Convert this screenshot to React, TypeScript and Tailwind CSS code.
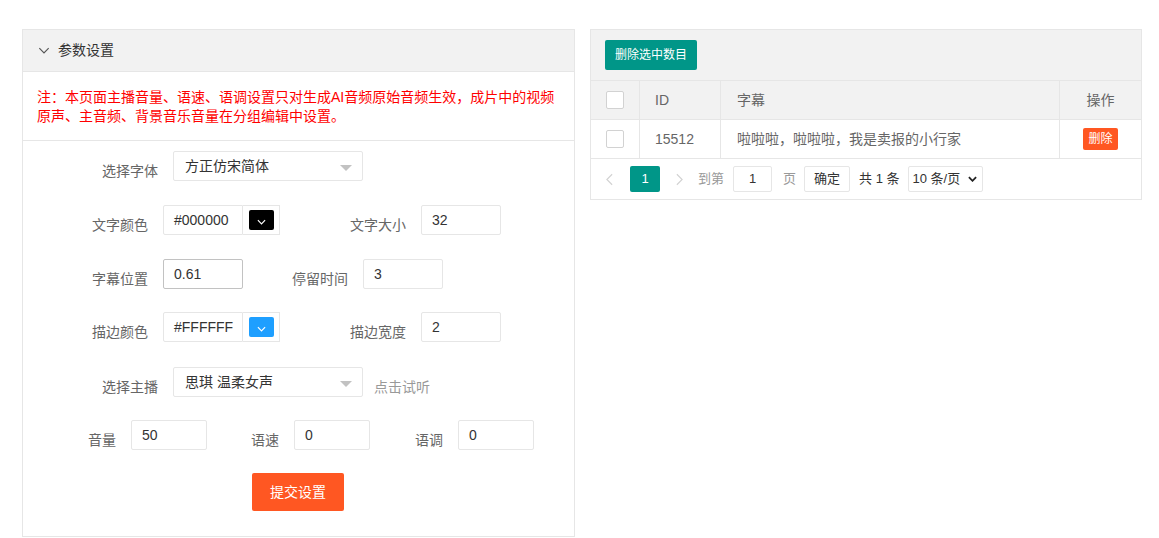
import React from "react";

const Chevron = ({ className = "", color = "#fff", sw = "1.3" }: { className?: string; color?: string; sw?: string }) => (
  <svg viewBox="0 0 10 6" className={className} fill="none">
    <path d="M1 1 L5 5 L9 1" stroke={color} strokeWidth={sw} />
  </svg>
);

const Tri = () => (
  <span className="absolute right-[10px] top-[13px] w-0 h-0 border-l-[6px] border-r-[6px] border-t-[6px] border-l-transparent border-r-transparent border-t-[#c2c2c2]" />
);

const Label = ({ children, w, cls = "" }: { children: React.ReactNode; w: string; cls?: string }) => (
  <div className={`${w} ${cls} pt-[9px] text-[14px] text-[#666] leading-[20px] whitespace-nowrap`}>{children}</div>
);

const Input = ({ value, w, cls = "", bc = "border-[#e6e6e6]" }: { value: string; w: string; cls?: string; bc?: string }) => (
  <div className={`${w} h-[30px] border ${bc} bg-white rounded-[2px] pl-[10px] flex items-center text-[14px] text-[#333] ${cls}`}>
    {value}
  </div>
);

const ColorInput = ({ value, swatch, chev }: { value: string; swatch: string; chev: string }) => (
  <div className="flex h-[30px]">
    <div className="w-[80px] h-[30px] border border-[#e6e6e6] rounded-l-[2px] pl-[10px] flex items-center text-[14px] text-[#333]">{value}</div>
    <div className="w-[37px] h-[30px] border border-l-0 border-[#e6e6e6] flex items-center justify-center">
      <div className={`w-[25px] h-[20px] rounded-[2px] flex items-center justify-center ${swatch}`}>
        <Chevron className="w-[9px] h-[6px] mt-[3px]" color={chev} />
      </div>
    </div>
  </div>
);

const Select = ({ value }: { value: string }) => (
  <div className="relative w-[190px] h-[30px] border border-[#e6e6e6] rounded-[2px] bg-white pl-[11px] flex items-center text-[14px] text-[#333]">
    {value}
    <Tri />
  </div>
);

const Check = () => <div className="w-[18px] h-[18px] border border-[#d2d2d2] rounded-[2px] bg-white" />;

export default function App() {
  return (
    <div className="w-[1159px] h-[538px] bg-white font-['Liberation_Sans','Noto_Sans_CJK_SC',sans-serif] overflow-hidden">
      <div className="flex items-start pl-[22px] pt-[29px] gap-[15px]">
        {/* Left panel */}
        <div className="w-[553px] h-[508px] border border-[#e6e6e6] flex flex-col">
          <div className="h-[42px] bg-[#f2f2f2] border-b border-[#e6e6e6] flex items-center pl-[15px] text-[14px] text-[#333]">
            <Chevron className="w-[12px] h-[7px] mr-[8px]" color="#555" sw="1" />
            参数设置
          </div>
          <div className="h-[69px] border-b border-[#e6e6e6] pl-[14px] pt-[16px] text-[14px] leading-[19px] text-[#ff0000] whitespace-nowrap">
            注：本页面主播音量、语速、语调设置只对生成AI音频原始音频生效，成片中的视频
            <br />
            原声、主音频、背景音乐音量在分组编辑中设置。
          </div>
          <div className="flex flex-col pt-[10px]">
            {/* row1 */}
            <div className="flex items-center">
              <Label w="w-[56px]" cls="ml-[79px]">选择字体</Label>
              <div className="ml-[15px]"><Select value="方正仿宋简体" /></div>
            </div>
            {/* row2 */}
            <div className="flex items-center mt-[24px]">
              <Label w="w-[56px]" cls="ml-[69px]">文字颜色</Label>
              <div className="ml-[15px]"><ColorInput value="#000000" swatch="bg-black" chev="#fff" /></div>
              <Label w="w-[56px]" cls="ml-[70px]">文字大小</Label>
              <Input value="32" w="w-[80px]" cls="ml-[15px]" />
            </div>
            {/* row3 */}
            <div className="flex items-center mt-[24px]">
              <Label w="w-[56px]" cls="ml-[69px]">字幕位置</Label>
              <Input value="0.61" w="w-[80px]" cls="ml-[15px]" bc="border-[#c2c2c2]" />
              <Label w="w-[56px]" cls="ml-[49px]">停留时间</Label>
              <Input value="3" w="w-[80px]" cls="ml-[15px]" />
            </div>
            {/* row4 */}
            <div className="flex items-center mt-[23px]">
              <Label w="w-[56px]" cls="ml-[69px]">描边颜色</Label>
              <div className="ml-[15px]"><ColorInput value="#FFFFFF" swatch="bg-[#1e9fff]" chev="#fff" /></div>
              <Label w="w-[56px]" cls="ml-[70px]">描边宽度</Label>
              <Input value="2" w="w-[80px]" cls="ml-[15px]" />
            </div>
            {/* row5 */}
            <div className="flex items-center mt-[25px]">
              <Label w="w-[56px]" cls="ml-[79px]">选择主播</Label>
              <div className="ml-[15px]"><Select value="思琪 温柔女声" /></div>
              <div className="ml-[11px] pt-[9px] text-[14px] text-[#999] leading-[20px]">点击试听</div>
            </div>
            {/* row6 */}
            <div className="flex items-center mt-[23px]">
              <Label w="w-[28px]" cls="ml-[65px]">音量</Label>
              <Input value="50" w="w-[76px]" cls="ml-[15px]" />
              <Label w="w-[28px]" cls="ml-[44px]">语速</Label>
              <Input value="0" w="w-[76px]" cls="ml-[15px]" />
              <Label w="w-[28px]" cls="ml-[45px]">语调</Label>
              <Input value="0" w="w-[76px]" cls="ml-[15px]" />
            </div>
            <div className="flex mt-[23px] pl-[229px]">
              <div className="w-[92px] h-[38px] bg-[#ff5722] rounded-[2px] text-white text-[14px] flex items-center justify-center">
                提交设置
              </div>
            </div>
          </div>
        </div>

        {/* Right panel */}
        <div className="w-[552px] border border-[#e6e6e6] flex flex-col text-[14px] text-[#666]">
          <div className="h-[51px] bg-[#f2f2f2] border-b border-[#e6e6e6] flex items-center pl-[14px]">
            <div className="h-[30px] px-[10px] bg-[#009688] rounded-[2px] text-white text-[12px] flex items-center">删除选中数目</div>
          </div>
          <div className="h-[39px] bg-[#f2f2f2] border-b border-[#e6e6e6] flex">
            <div className="w-[49px] border-r border-[#e6e6e6] flex items-center pl-[15px]"><Check /></div>
            <div className="w-[81px] border-r border-[#e6e6e6] flex items-center pl-[15px]">ID</div>
            <div className="w-[339px] border-r border-[#e6e6e6] flex items-center pl-[16px]">字幕</div>
            <div className="flex-1 flex items-center justify-center">操作</div>
          </div>
          <div className="h-[39px] border-b border-[#e6e6e6] flex">
            <div className="w-[49px] border-r border-[#e6e6e6] flex items-center pl-[15px]"><Check /></div>
            <div className="w-[81px] border-r border-[#e6e6e6] flex items-center pl-[15px]">15512</div>
            <div className="w-[339px] border-r border-[#e6e6e6] flex items-center pl-[16px]">啦啦啦，啦啦啦，我是卖报的小行家</div>
            <div className="flex-1 flex items-center justify-center">
              <div className="h-[22px] px-[5px] bg-[#ff5722] rounded-[2px] text-white text-[12px] flex items-center">删除</div>
            </div>
          </div>
          <div className="h-[40px] flex items-center pl-[15px] text-[13px]">
            <svg viewBox="0 0 8 14" className="w-[7px] h-[13px]" fill="none">
              <path d="M7 1 L1 7 L7 13" stroke="#d2d2d2" strokeWidth="1.3" />
            </svg>
            <div className="ml-[17px] w-[30px] h-[26px] bg-[#009688] rounded-[2px] text-white flex items-center justify-center">1</div>
            <svg viewBox="0 0 8 14" className="ml-[16px] w-[7px] h-[13px]" fill="none">
              <path d="M1 1 L7 7 L1 13" stroke="#d2d2d2" strokeWidth="1.3" />
            </svg>
            <span className="ml-[15px] text-[#999]">到第</span>
            <div className="ml-[9px] w-[39px] h-[26px] border border-[#e6e6e6] rounded-[2px] flex items-center justify-center text-[#333]">1</div>
            <span className="ml-[11px] text-[#999]">页</span>
            <div className="ml-[8px] w-[46px] h-[26px] border border-[#e6e6e6] rounded-[2px] flex items-center justify-center text-[#333]">确定</div>
            <span className="ml-[9px] text-[#333]">共 1 条</span>
            <div className="ml-[8px] w-[75px] h-[26px] border border-[#e6e6e6] rounded-[2px] flex items-center pl-[4px] text-[#333]">
              10 条/页
              <svg viewBox="0 0 10 6" className="ml-[8px] w-[9px] h-[6px]" fill="none">
                <path d="M1 1 L5 5 L9 1" stroke="#222" strokeWidth="2" />
              </svg>
            </div>
          </div>
        </div>
      </div>
    </div>
  );
}
